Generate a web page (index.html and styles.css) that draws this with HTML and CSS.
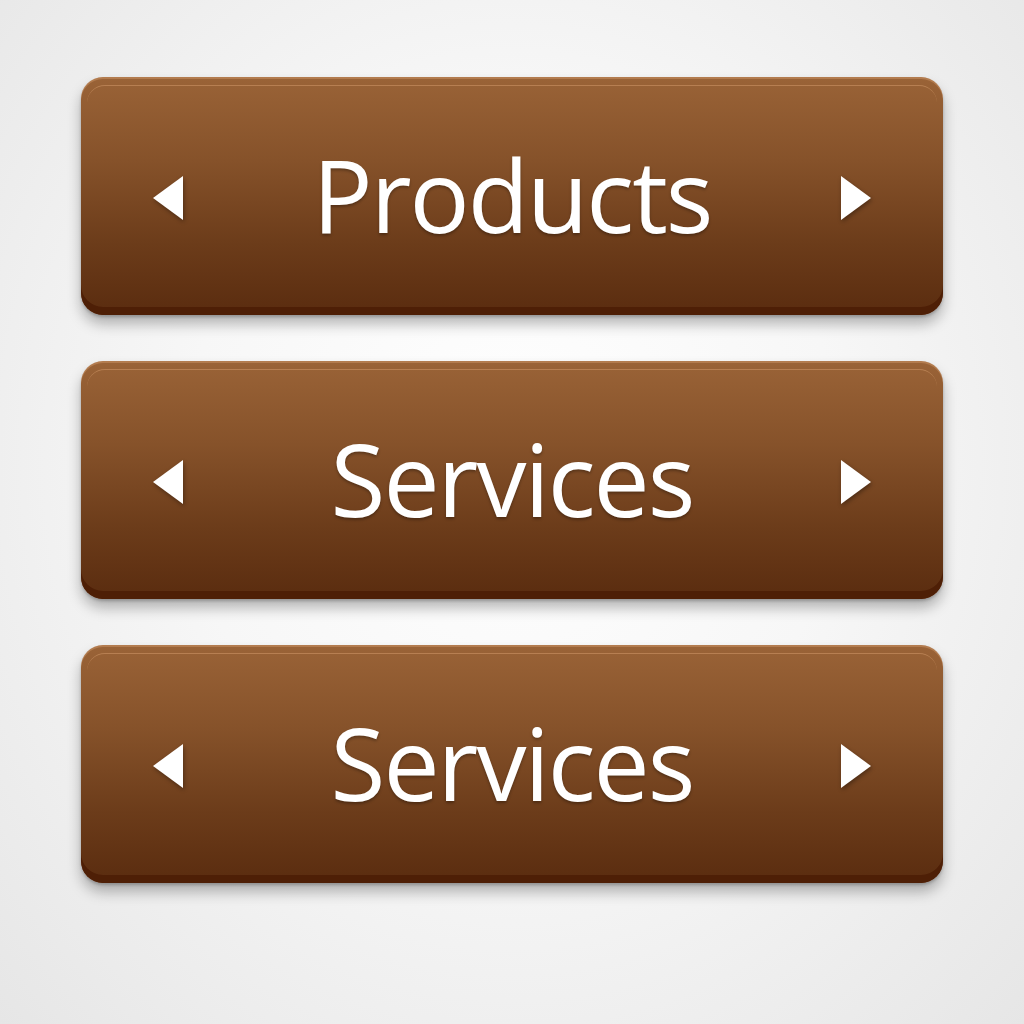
FILE: index.html
```html
<!DOCTYPE html>
<html>
<head>
<meta charset="utf-8">
<link rel="stylesheet" href="styles.css">
</head>
<body>
<div class="stack">
  <div class="btn">
    <svg class="arrow" width="30" height="44" viewBox="0 0 30 44"><polygon points="30,0 30,44 0,22" fill="#fff"/></svg>
    <span class="label">Products</span>
    <svg class="arrow" width="30" height="44" viewBox="0 0 30 44"><polygon points="0,0 0,44 30,22" fill="#fff"/></svg>
  </div>
  <div class="btn">
    <svg class="arrow" width="30" height="44" viewBox="0 0 30 44"><polygon points="30,0 30,44 0,22" fill="#fff"/></svg>
    <span class="label">Services</span>
    <svg class="arrow" width="30" height="44" viewBox="0 0 30 44"><polygon points="0,0 0,44 30,22" fill="#fff"/></svg>
  </div>
  <div class="btn">
    <svg class="arrow" width="30" height="44" viewBox="0 0 30 44"><polygon points="30,0 30,44 0,22" fill="#fff"/></svg>
    <span class="label">Services</span>
    <svg class="arrow" width="30" height="44" viewBox="0 0 30 44"><polygon points="0,0 0,44 30,22" fill="#fff"/></svg>
  </div>
</div>
</body>
</html>
```
FILE: styles.css
```css
html, body {
  margin: 0;
  padding: 0;
}
body {
  width: 1024px;
  height: 1024px;
  background: radial-gradient(ellipse at 50% 45%, #ffffff 0%, #f7f7f7 45%, #e6e6e6 100%);
  font-family: "Open Sans", "Liberation Sans", sans-serif;
  overflow: hidden;
}
.stack {
  display: flex;
  flex-direction: column;
  gap: 46px;
  padding: 77px 0 0 81px;
  width: 862px;
}
.btn {
  position: relative;
  height: 238px;
  border-radius: 22px;
  background: linear-gradient(180deg, #9a6337 0%, #86522a 35%, #6c3c1a 70%, #5a2c0f 100%);
  box-shadow: inset 0 -8px 0 #4e1f06, inset 0 2px 0 rgba(255,200,150,0.25), 0 9px 14px rgba(0,0,0,0.28), 0 2px 3px rgba(0,0,0,0.2);
  display: flex;
  align-items: center;
  justify-content: space-between;
  padding: 4px 72px 0 72px;
  box-sizing: border-box;
}
.btn::before {
  content: "";
  position: absolute;
  left: 6px;
  right: 6px;
  top: 8px;
  bottom: 14px;
  border-radius: 18px;
  border-top: 1.5px solid rgba(255, 200, 150, 0.3);
  pointer-events: none;
}
.arrow {
  display: block;
  filter: drop-shadow(1px 2px 2px rgba(0,0,0,0.35));
}
.label {
  color: #fff;
  font-size: 100px;
  line-height: 1;
  letter-spacing: -2px;
  text-shadow: 0 2px 3px rgba(0,0,0,0.3);
  margin-top: -8px;
}
```
